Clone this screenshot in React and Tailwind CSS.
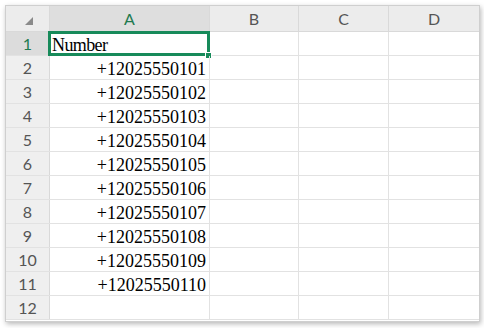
import React from "react";

const nums = [
  "+12025550101",
  "+12025550102",
  "+12025550103",
  "+12025550104",
  "+12025550105",
  "+12025550106",
  "+12025550107",
  "+12025550108",
  "+12025550109",
  "+12025550110",
];

const rows = ["Number", ...nums, ""];

export default function App() {
  return (
    <div className="w-[484px] h-[328px] bg-white pl-[5px] pt-[5px]">
      <div className="w-[475px] h-[317px] border border-[#cfcfcf] bg-white shadow-[1px_2px_5px_rgba(0,0,0,0.28)] overflow-hidden flex flex-col">
        {/* header row */}
        <div className="flex h-[26px] border-b border-[#d9d9d9] bg-[#ececec] text-[16px] text-[#555] [font-family:Lato,'Open_Sans',sans-serif]">
          <div className="w-[44px] border-r border-[#d9d9d9] flex items-end justify-center pb-[6px] pl-[2px]">
            <svg width="8" height="8" viewBox="0 0 8 8">
              <polygon points="8,0 8,8 0,8" fill="#8a8a8a" />
            </svg>
          </div>
          <div className="w-[160px] border-r border-[#d9d9d9] bg-[#dedede] flex items-center justify-center text-[#1f7a4f]">A</div>
          <div className="w-[89px] border-r border-[#d9d9d9] flex items-center justify-center">B</div>
          <div className="w-[90px] border-r border-[#d9d9d9] flex items-center justify-center">C</div>
          <div className="w-[90px] flex items-center justify-center">D</div>
        </div>
        {rows.map((v, i) => (
          <div key={i} className="flex h-[24px] border-b border-[#e2e2e2]">
            <div
              className={
                "w-[44px] border-r border-[#d9d9d9] flex items-center justify-center text-[16px] [font-family:Lato,'Open_Sans',sans-serif] " +
                (i === 0 ? "bg-[#dcdcdc] text-[#1f7a4f]" : "bg-[#efefef] text-[#555]")
              }
            >
              {i + 1}
            </div>
            <div
              className={
                "relative w-[160px] border-r border-[#e2e2e2] flex items-center pt-[3px] text-[18px] text-black [font-family:'Liberation_Serif',serif] " +
                (i === 0 ? "justify-start pl-[2px] tracking-[-0.6px]" : "justify-end pr-[3px]")
              }
            >
              {v}
              {i === 0 && (
                <>
                  <div className="absolute left-[-2px] top-[-1px] w-[162px] h-[25px] border-[3px] border-[#178a5a]" />
                  <div className="absolute left-[155px] top-[20px] w-[7px] h-[7px] bg-[#178a5a] border border-white" />
                </>
              )}
            </div>
            <div className="w-[89px] border-r border-[#e2e2e2]" />
            <div className="w-[90px] border-r border-[#e2e2e2]" />
            <div className="w-[90px]" />
          </div>
        ))}
      </div>
    </div>
  );
}
